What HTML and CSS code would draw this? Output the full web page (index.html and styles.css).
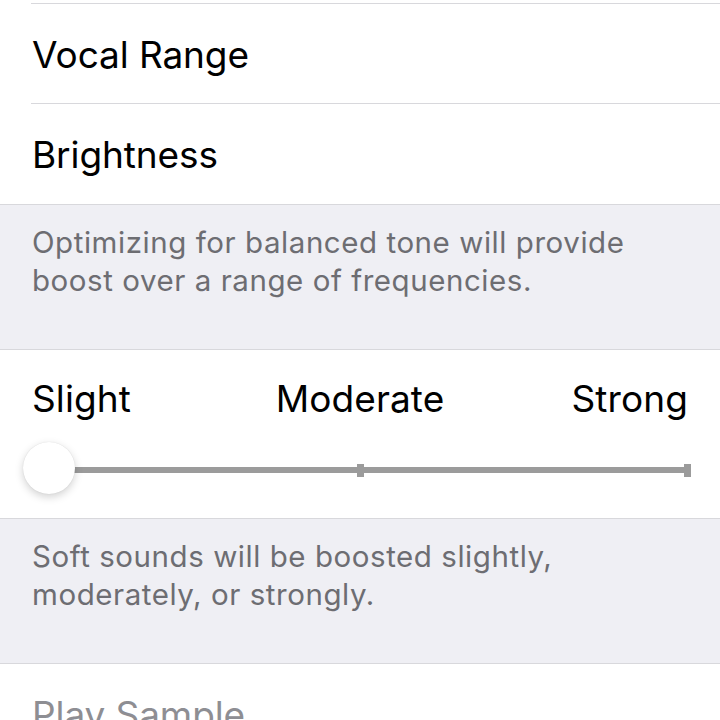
FILE: index.html
```html
<!DOCTYPE html>
<html lang="en">
  <head>
    <meta charset="UTF-8" />
    <meta name="viewport" content="width=device-width, initial-scale=1.0" />
    <title>Headphone Accommodations</title>
    <link rel="stylesheet" href="styles.css">
  </head>
  <body>
    <div class="group">
      <div class="row row-cut"></div>
      <div class="row"><span class="label">Vocal Range</span></div>
      <div class="row last"><span class="label">Brightness</span></div>
    </div>
    <p class="footer">Optimizing for balanced tone will provide boost over a range of frequencies.</p>

    <div class="group slider-group">
      <div class="levels">
        <span class="lv-left">Slight</span>
        <span class="lv-mid">Moderate</span>
        <span class="lv-right">Strong</span>
      </div>
      <div class="slider">
        <div class="track"></div>
        <div class="tick tick-mid"></div>
        <div class="tick tick-end"></div>
        <div class="thumb"></div>
      </div>
    </div>
    <p class="footer">Soft sounds will be boosted slightly, moderately, or strongly.</p>

    <div class="group">
      <div class="row last"><span class="label disabled">Play Sample</span></div>
    </div>
  </body>
</html>
```

FILE: styles.css
```css
body {
  margin: 0;
  background: #efeff4;
  font-family: Inter, "Liberation Sans", sans-serif;
  color: #000;
  overflow: hidden;
}

.group {
  background: #fff;
  border-bottom: 1px solid #d8d8dc;
}

.row {
  height: 99px;
  margin-left: 31px;
  border-bottom: 1px solid #d8d8dc;
  display: flex;
  align-items: center;
}

.row-cut {
  height: 3px;
}

.row.last {
  border-bottom: none;
  height: 100px;
}

.label {
  font-size: 37px;
  letter-spacing: -0.1px;
  padding-left: 1px;
  margin-top: 1px;
}

.label.disabled {
  color: #8e8e93;
}

.footer {
  margin: 0;
  padding: 18px 32px 50px;
  font-size: 29.5px;
  line-height: 38px;
  color: #6d6d72;
  letter-spacing: 0.55px;
  border-bottom: 1px solid #d8d8dc;
}

.slider-group {
  padding: 27px 32px 0;
}

.levels {
  display: grid;
  grid-template-columns: 1fr auto 1fr;
  font-size: 37px;
  line-height: 44px;
  letter-spacing: 0.1px;
}

.lv-right {
  justify-self: end;
}

.slider {
  position: relative;
  height: 97px;
}

.track {
  position: absolute;
  left: 0;
  right: 0;
  top: 46px;
  height: 6px;
  background: #9b9b9b;
}

.tick {
  position: absolute;
  top: 43px;
  width: 7px;
  height: 13px;
  background: #9b9b9b;
}

.tick-mid {
  left: 325px;
}

.tick-end {
  right: -3px;
}

.thumb {
  position: absolute;
  left: -9px;
  top: 21px;
  width: 52px;
  height: 52px;
  border-radius: 50%;
  background: #fff;
  box-shadow: 0 3px 8px rgba(0, 0, 0, 0.18), 0 0 1px rgba(0, 0, 0, 0.15);
}
```
